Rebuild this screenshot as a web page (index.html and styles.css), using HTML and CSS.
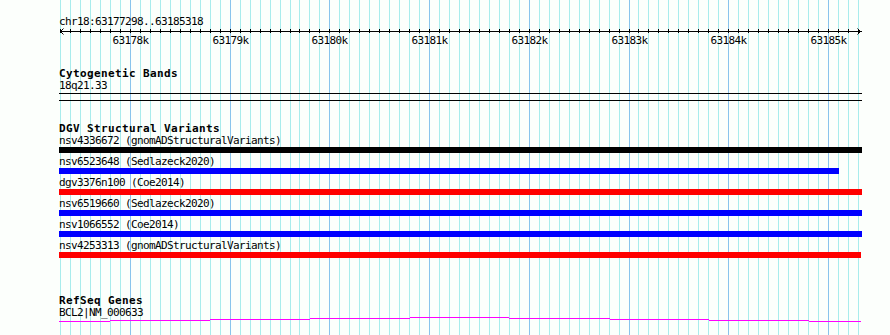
FILE: index.html
```html
<!DOCTYPE html>
<html lang="en">
<head>
    <meta charset="UTF-8">
    <title>chr18:63177298..63185318</title>
    <link rel="stylesheet" href="styles.css">
</head>
<body>
    <div class="browser">
        <div class="grid" id="grid"></div>

        <div class="tracks">
            <div class="locus">chr18:63177298..63185318</div>
            <div class="scale" id="scale">
                <svg class="scale-line" id="scaleLine" width="803" height="6"></svg>
            </div>

            <section class="track track-cyto">
                <h2 class="track-title">Cytogenetic Bands</h2>
                <div class="feature-label">18q21.33</div>
                <div class="band"></div>
            </section>

            <section class="track track-dgv">
                <h2 class="track-title">DGV Structural Variants</h2>
                <div class="variant">
                    <div class="feature-label">nsv4336672 (gnomADStructuralVariants)</div>
                    <div class="bar bar-black" style="width: 803px"></div>
                </div>
                <div class="variant">
                    <div class="feature-label">nsv6523648 (Sedlazeck2020)</div>
                    <div class="bar bar-blue" style="width: 780px"></div>
                </div>
                <div class="variant">
                    <div class="feature-label">dgv3376n100 (Coe2014)</div>
                    <div class="bar bar-red" style="width: 803px"></div>
                </div>
                <div class="variant">
                    <div class="feature-label">nsv6519660 (Sedlazeck2020)</div>
                    <div class="bar bar-blue" style="width: 803px"></div>
                </div>
                <div class="variant">
                    <div class="feature-label">nsv1066552 (Coe2014)</div>
                    <div class="bar bar-blue" style="width: 803px"></div>
                </div>
                <div class="variant">
                    <div class="feature-label">nsv4253313 (gnomADStructuralVariants)</div>
                    <div class="bar bar-red" style="width: 802px"></div>
                </div>
            </section>

            <section class="track track-refseq">
                <h2 class="track-title">RefSeq Genes</h2>
                <div class="feature-label">BCL2|NM_000633</div>
                <svg class="gene" id="gene" width="803" height="6"></svg>
            </section>
        </div>
    </div>

    <script>
    // view: 63178000 sits at x=130, ~10.03 bp per pixel
    const refBp = 63178000;
    const refX = 130;
    const bpPerPx = 10.03;
    const left = 59;
    const svgNs = 'http://www.w3.org/2000/svg';

    function xOf(bp) {
        return Math.round(refX + (bp - refBp) / bpPerPx);
    }

    function rect(parent, x, y, w, h, fill) {
        const r = document.createElementNS(svgNs, 'rect');
        r.setAttribute('x', x);
        r.setAttribute('y', y);
        r.setAttribute('width', w);
        r.setAttribute('height', h);
        r.setAttribute('fill', fill);
        parent.appendChild(r);
    }

    const grid = document.getElementById('grid');
    const scale = document.getElementById('scale');
    const scaleLine = document.getElementById('scaleLine');

    // ruler baseline
    rect(scaleLine, 1, 2, 802, 1, '#000');

    for (let bp = 63177300; bp <= 63185300; bp += 100) {
        const x = xOf(bp);
        const major = bp % 1000 === 0;

        const line = document.createElement('div');
        line.className = major ? 'grid-line major' : 'grid-line';
        line.style.left = x + 'px';
        grid.appendChild(line);

        rect(scaleLine, x - left, 0, 1, 4, '#000');

        if (major) {
            const label = document.createElement('span');
            label.className = 'tick-label';
            label.textContent = (bp / 1000) + 'k';
            label.style.left = (x - left + 0.5) + 'px';
            scale.appendChild(label);
        }
    }

    // arrow heads at both ends of the ruler
    const arrows = document.createElementNS(svgNs, 'path');
    arrows.setAttribute('d', 'M4.5 -0.5 L1.5 2.5 L4.5 5.5 M798.5 -0.5 L801.5 2.5 L798.5 5.5');
    arrows.setAttribute('class', 'arrow');
    scaleLine.appendChild(arrows);

    // intron line of BCL2, drawn as steps
    const gene = document.getElementById('gene');
    const steps = [
        [59, 110, 324], [110, 210, 323], [210, 310, 322], [310, 410, 321],
        [410, 509, 320], [509, 610, 321], [610, 709, 322], [709, 809, 323],
        [809, 861, 324]
    ];
    steps.forEach(function (s) {
        rect(gene, s[0] - left, s[2] - 319, s[1] - s[0], 1, '#ff00ff');
    });
    </script>
</body>
</html>
```

FILE: styles.css
```css
body {
    margin: 0;
    background-color: #fcfffc;
    color: #000;
    font-family: "DejaVu Sans Mono", "Liberation Mono", monospace;
    font-size: 11px;
}

.browser {
    position: relative;
    height: 335px;
    overflow: hidden;
}

/* vertical guide lines behind all tracks */
.grid {
    position: absolute;
    top: 0;
    bottom: 0;
    left: 0;
    right: 0;
    z-index: 0;
}

.grid-line {
    position: absolute;
    top: 0;
    bottom: 0;
    width: 1px;
    background-color: #a8ecec;
}

.grid-line.major {
    background-color: #88c4ec;
}

.tracks {
    position: relative;
    z-index: 1;
    width: 803px;
    padding-left: 59px;
}

.locus {
    padding-top: 16px;
    line-height: 12px;
    letter-spacing: -0.62px;
}

.scale {
    position: relative;
    height: 19px;
}

.scale-line {
    display: block;
    position: absolute;
    top: 1px;
    left: 0;
    overflow: visible;
    shape-rendering: crispEdges;
}

.arrow {
    fill: none;
    stroke: #000;
    stroke-width: 1;
    shape-rendering: auto;
}

.tick-label {
    position: absolute;
    top: 7px;
    line-height: 12px;
    letter-spacing: -0.62px;
    transform: translateX(-50%);
    white-space: nowrap;
}

.track-title {
    margin: 0;
    font-size: 11px;
    font-weight: bold;
    line-height: 12px;
    letter-spacing: 0.38px;
}

.feature-label {
    line-height: 12px;
    letter-spacing: -0.62px;
    white-space: nowrap;
}

.track-cyto {
    margin-top: 21px;
}

.band {
    height: 6px;
    margin-top: 1px;
    border-top: 1px solid #000;
    border-bottom: 1px solid #000;
}

.track-dgv {
    margin-top: 22px;
}

.bar {
    height: 6px;
    margin-bottom: 3px;
}

.bar-black {
    background-color: #000;
}

.bar-blue {
    background-color: #0000ff;
}

.bar-red {
    background-color: #ff0000;
}

.track-refseq {
    margin-top: 37px;
}

.gene {
    display: block;
    margin-top: -3px;
    shape-rendering: crispEdges;
}
```
